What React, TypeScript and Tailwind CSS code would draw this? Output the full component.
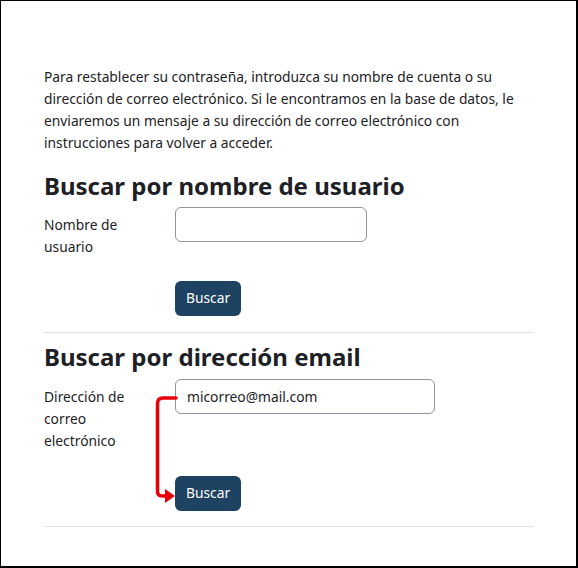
import React from 'react';

const labelCls = 'w-[131px] shrink-0 py-[7px] text-[13.8px] leading-[22px]';
const inputCls =
  'h-[35px] rounded-[6px] border border-[#8f959e] bg-white px-[11px] text-[13.8px] text-[#1d2125] outline-none';

function Buscar() {
  return (
    <button className="h-[35px] rounded-[6px] bg-[#1d4262] px-[11px] text-[13.8px] text-white">
      Buscar
    </button>
  );
}

export default function App() {
  return (
    <div className="w-[578px] h-[568px] bg-white border-black border-t border-l border-r-2 border-b-2 font-['Noto_Sans',sans-serif] text-[#1d2125]">
      <div className="relative w-[533px] pl-[43px] pt-[65px]">
        <p className="text-[13.8px] leading-[22px] mb-[18px]">
          Para restablecer su contraseña, introduzca su nombre de cuenta o su dirección de correo
          electrónico. Si le encontramos en la base de datos, le enviaremos un mensaje a su
          dirección de correo electrónico con instrucciones para volver a acceder.
        </p>

        <h3 className="text-[24px] leading-[28px] font-bold mb-[7px]">Buscar por nombre de usuario</h3>
        <div className="flex">
          <label className={labelCls}>
            Nombre de
            <br />
            usuario
          </label>
          <input className={`${inputCls} w-[192px]`} />
        </div>
        <div className="pl-[131px] mt-[16px]">
          <Buscar />
        </div>
        <hr className="mt-[16px] border-t border-[#dee2e6]" />

        <h3 className="mt-[10px] text-[24px] leading-[28px] font-bold mb-[8px]">Buscar por dirección email</h3>
        <div className="flex">
          <label className={labelCls}>
            Dirección de
            <br />
            correo
            <br />
            electrónico
          </label>
          <input className={`${inputCls} w-[260px]`} defaultValue="micorreo@mail.com" />
        </div>
        <div className="pl-[131px] mt-[17px]">
          <Buscar />
        </div>
        <hr className="mt-[15px] border-t border-[#dee2e6]" />

        {/* flecha roja */}
        <svg
          className="absolute left-[150px] top-[392px] pointer-events-none"
          width="30"
          height="112"
          viewBox="0 0 30 112"
        >
          <path
            d="M25 5 H12 Q6.5 5 6.5 10.5 V98 Q6.5 103 11 103 H16"
            fill="none"
            stroke="#e8000b"
            strokeWidth="3.5"
            strokeLinecap="round"
          />
          <path d="M14 96 L24 103 L14 110 Z" fill="#e8000b" />
        </svg>
      </div>
    </div>
  );
}
